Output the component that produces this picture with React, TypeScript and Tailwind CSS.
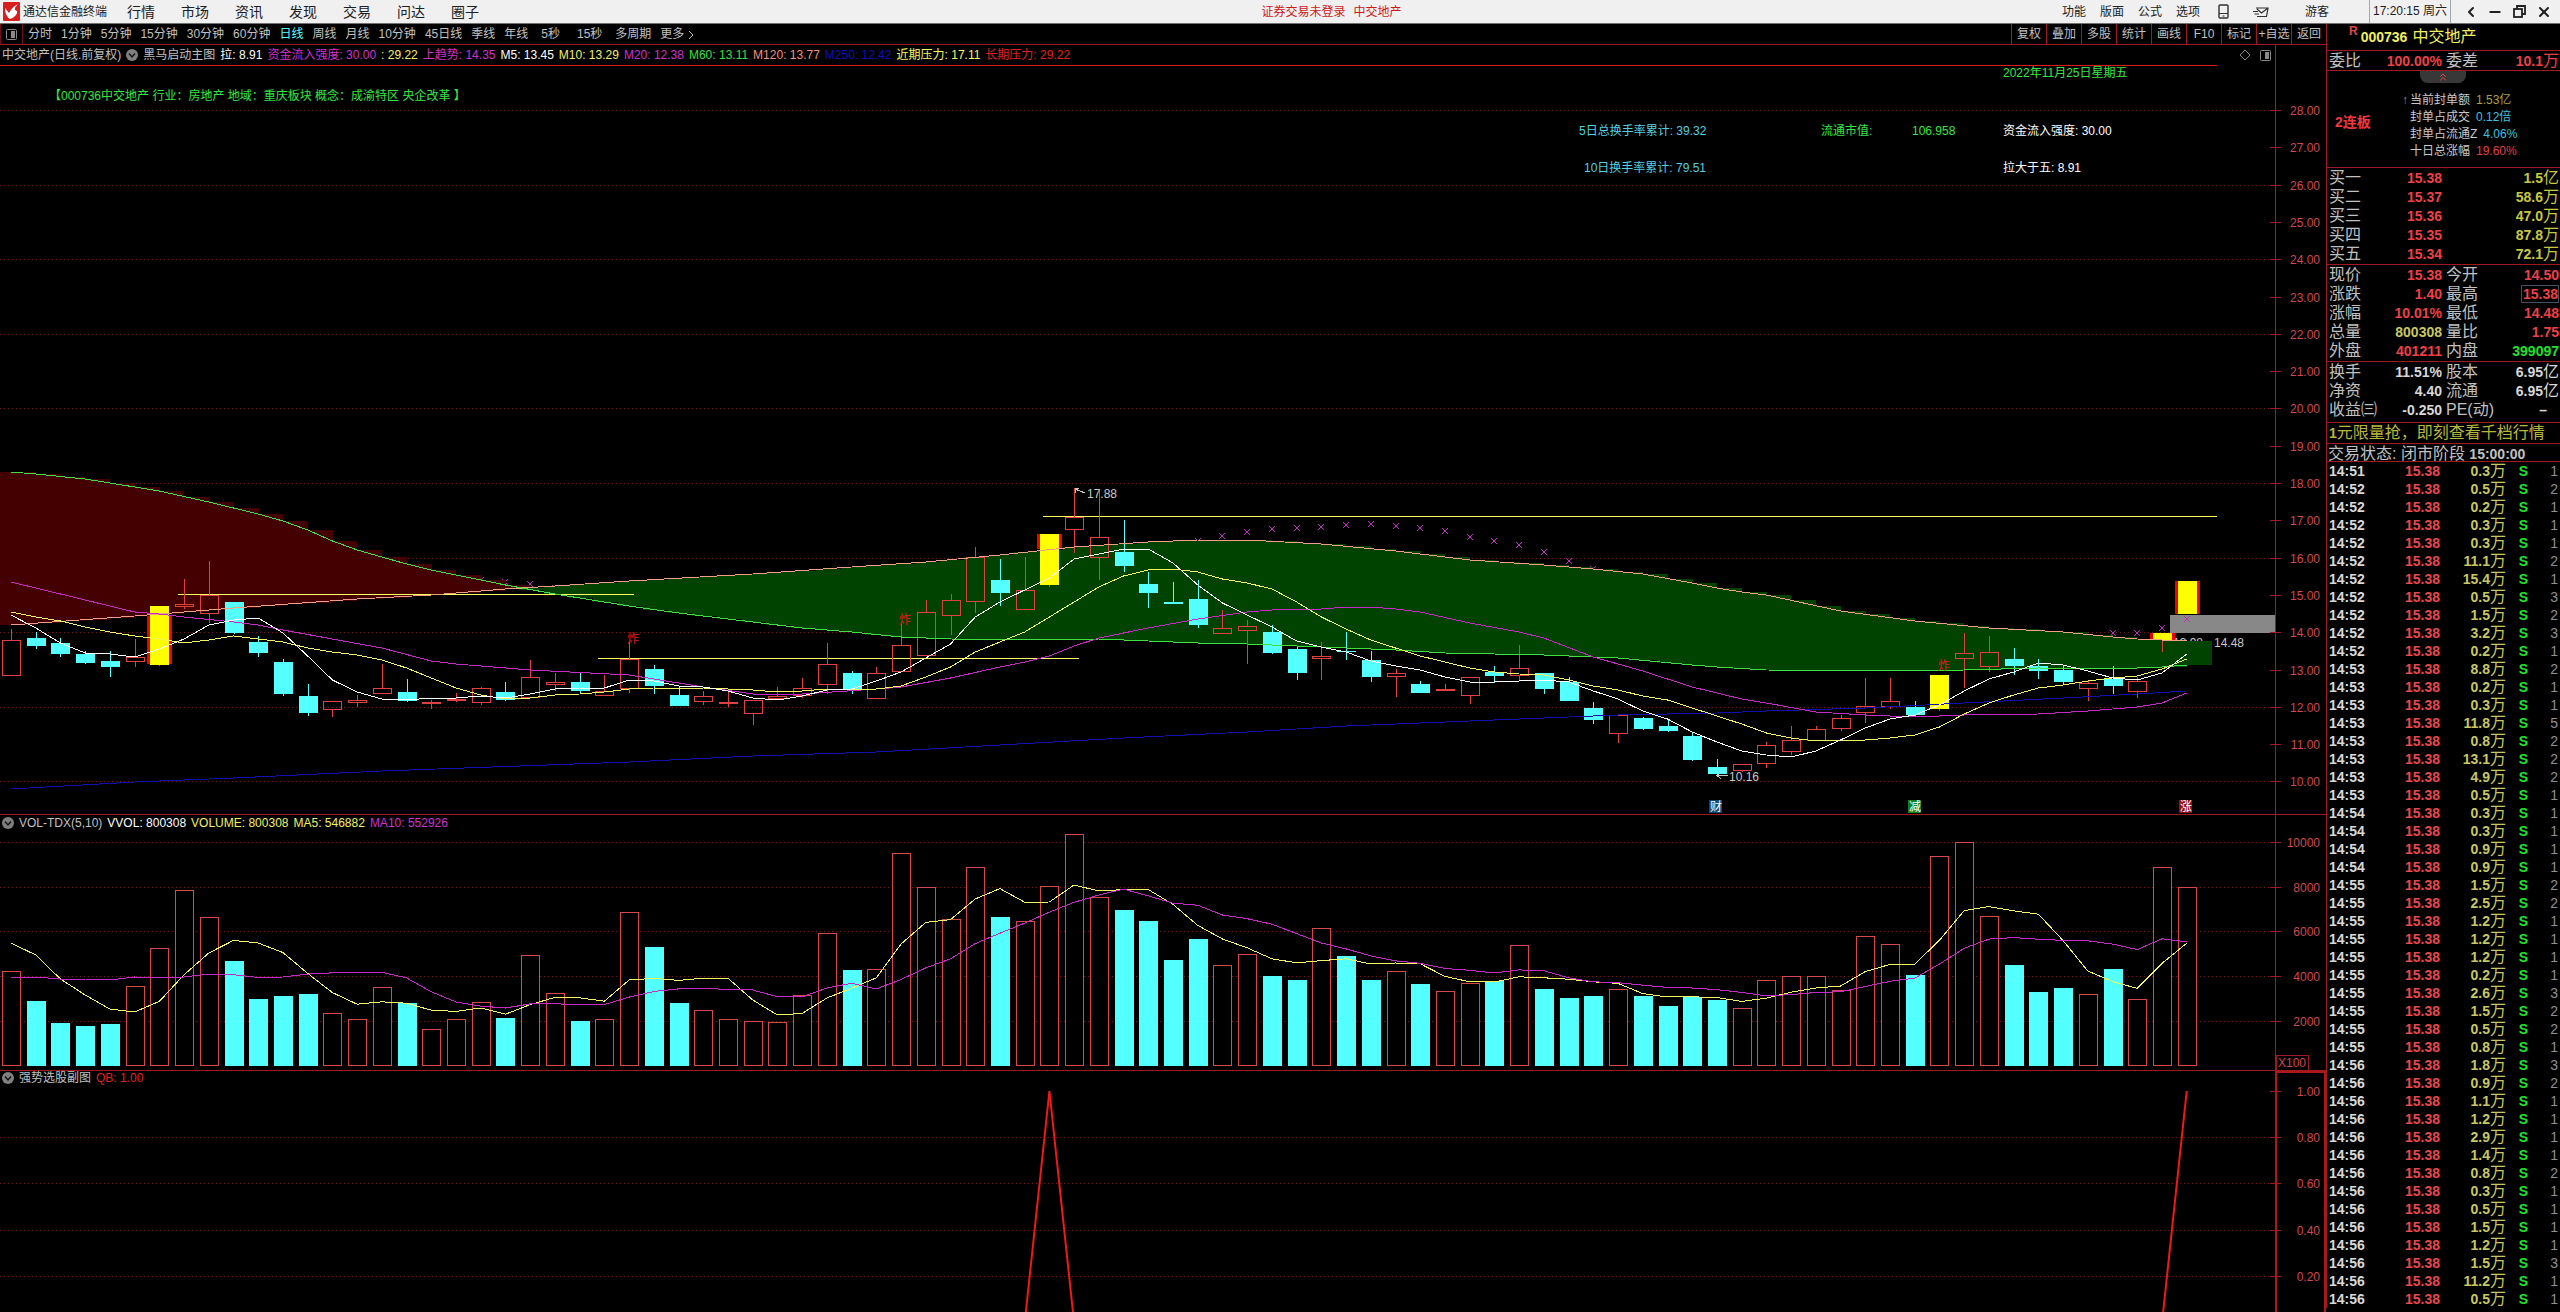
import type { ReactNode } from "react";
import { ChevronLeft, Minus, X, ChevronsUp } from "lucide-react";

const menus = ["行情", "市场", "资讯", "发现", "交易", "问达", "圈子"];
const rightMenus = ["功能", "版面", "公式", "选项"];
const periods = ["分时", "1分钟", "5分钟", "15分钟", "30分钟", "60分钟", "日线", "周线", "月线", "10分钟", "45日线", "季线", "年线", "5秒", "15秒", "多周期", "更多"];
const tools = ["复权", "叠加", "多股", "统计", "画线", "F10", "标记", "+自选", "返回"];

type Kind = "r" | "c" | "y";
// kind, body top, body bottom, high, low
const candles: [Kind, number, number, number, number][] = [
  ["r", 640, 676, 629, 676], ["c", 638, 646, 632, 649], ["c", 643, 654, 638, 657], ["c", 654, 663, 651, 664], ["c", 661, 667, 651, 677],
  ["r", 657, 662, 639, 667], ["y", 606, 665, 606, 666], ["r", 604, 607, 579, 609], ["r", 595, 614, 561, 623], ["c", 602, 633, 602, 634],
  ["c", 642, 653, 636, 657], ["c", 662, 694, 659, 696], ["c", 696, 713, 684, 716], ["r", 701, 710, 701, 717], ["r", 700, 703, 695, 707],
  ["r", 688, 694, 664, 694], ["c", 692, 701, 679, 702], ["r", 702, 704, 700, 709], ["r", 699, 700, 693, 702], ["r", 688, 703, 687, 705],
  ["c", 692, 700, 682, 701], ["r", 677, 698, 660, 698], ["r", 682, 685, 673, 691], ["c", 682, 691, 673, 693], ["r", 691, 696, 675, 696],
  ["r", 659, 689, 642, 693], ["c", 669, 686, 665, 694], ["c", 695, 706, 687, 706], ["r", 696, 702, 691, 705], ["r", 702, 703, 692, 707],
  ["r", 700, 714, 700, 725], ["r", 696, 699, 687, 699], ["r", 688, 696, 678, 698], ["r", 664, 685, 643, 694], ["c", 673, 689, 671, 694],
  ["r", 673, 699, 667, 699], ["r", 645, 672, 624, 672], ["r", 612, 656, 600, 656], ["r", 600, 616, 594, 635], ["r", 557, 602, 547, 613],
  ["c", 580, 593, 559, 606], ["r", 590, 610, 557, 610], ["y", 534, 585, 534, 587], ["r", 517, 530, 488, 553], ["r", 537, 558, 490, 580],
  ["c", 552, 566, 520, 572], ["c", 584, 593, 572, 608], ["c", 602, 604, 582, 604], ["c", 599, 625, 580, 628], ["r", 628, 634, 610, 634],
  ["r", 626, 631, 620, 664], ["c", 632, 653, 625, 654], ["c", 649, 673, 646, 680], ["r", 656, 659, 642, 680], ["c", 651, 652, 632, 660],
  ["c", 660, 677, 651, 682], ["r", 673, 677, 669, 697], ["c", 684, 693, 681, 693], ["r", 689, 691, 684, 691], ["r", 677, 696, 677, 704],
  ["c", 672, 676, 666, 683], ["r", 668, 676, 645, 680], ["c", 673, 689, 673, 694], ["c", 682, 701, 677, 701], ["c", 708, 720, 702, 724],
  ["r", 715, 734, 715, 743], ["c", 718, 729, 717, 730], ["c", 726, 731, 720, 732], ["c", 736, 760, 733, 761], ["c", 767, 774, 759, 775],
  ["r", 764, 771, 764, 772], ["r", 745, 764, 742, 768], ["r", 740, 752, 726, 755], ["r", 729, 741, 726, 741], ["r", 718, 729, 715, 731],
  ["r", 706, 713, 678, 723], ["r", 701, 707, 678, 709], ["c", 707, 715, 701, 717], ["y", 675, 709, 672, 711], ["r", 653, 659, 633, 688],
  ["r", 652, 667, 636, 672], ["c", 659, 666, 648, 675], ["c", 666, 671, 659, 679], ["c", 670, 682, 665, 684], ["r", 683, 689, 681, 701],
  ["c", 679, 686, 666, 694], ["r", 681, 692, 677, 698], ["y", 633, 640, 633, 652], ["y", 581, 614, 581, 614],
];

const ma5 = [615, 628, 643, 653, 654, 657, 649, 639, 625, 620, 618, 633, 656, 680, 692, 699, 700, 698, 698, 696, 698, 694, 689, 688, 688, 680, 681, 686, 687, 691, 698, 700, 696, 690, 689, 681, 672, 658, 644, 617, 602, 590, 578, 559, 554, 549, 549, 563, 585, 603, 615, 627, 641, 647, 652, 661, 666, 670, 677, 682, 682, 681, 680, 682, 691, 699, 711, 719, 732, 742, 751, 755, 757, 751, 740, 728, 719, 715, 705, 691, 679, 672, 663, 665, 671, 678, 680, 673, 654];
const ma10 = [612, 617, 621, 627, 632, 636, 639, 643, 640, 636, 639, 642, 648, 652, 655, 660, 668, 678, 688, 695, 699, 698, 695, 694, 692, 689, 688, 688, 688, 689, 690, 692, 691, 689, 689, 689, 686, 677, 667, 652, 642, 632, 617, 602, 587, 576, 570, 569, 572, 579, 583, 589, 602, 617, 629, 640, 648, 656, 662, 668, 672, 674, 675, 680, 686, 690, 696, 700, 708, 716, 724, 733, 738, 741, 740, 740, 738, 735, 727, 714, 703, 695, 688, 685, 681, 678, 676, 669, 659];

// slow averages, sampled as [bar, y]
type Samples = [number, number][];
const ma20: Samples = [[0, 582], [5, 612], [6, 614], [7, 617], [9, 622], [10, 625], [11, 630], [13, 639], [15, 648], [17, 661], [18, 664], [21, 670], [25, 675], [26, 679], [28, 687], [30, 694], [32, 694], [35, 689], [36, 687], [38, 678], [40, 667], [41, 662], [42, 656], [43, 646], [44, 638], [46, 628], [48, 619], [50, 612], [51, 610], [53, 609], [54, 607], [55, 607], [56, 609], [57, 612], [59, 623], [61, 632], [62, 638], [64, 657], [66, 671], [68, 687], [70, 699], [71, 703], [73, 712], [75, 715], [77, 717], [79, 715], [82, 714], [84, 711], [86, 707], [87, 703], [88, 693]];
const ma60: Samples = [[0, 472], [1, 474], [3, 479], [6, 491], [8, 502], [9, 508], [10, 514], [11, 521], [12, 530], [13, 541], [14, 550], [15, 557], [16, 564], [17, 570], [18, 575], [20, 585], [22, 594], [24, 602], [25, 606], [27, 613], [30, 622], [32, 628], [34, 632], [36, 637], [38, 639], [42, 640], [44, 639], [46, 641], [48, 643], [50, 644], [54, 648], [56, 650], [58, 653], [60, 654], [62, 655], [65, 658], [68, 665], [69, 667], [71, 670], [77, 671], [79, 670], [82, 668], [85, 669], [86, 668], [87, 667], [88, 665]];
const ma120: Samples = [[0, 625], [5, 616], [7, 612], [9, 608], [14, 599], [17, 595], [20, 589], [22, 586], [25, 581], [30, 574], [34, 567], [37, 562], [40, 555], [43, 547], [46, 542], [48, 540], [50, 540], [53, 544], [56, 551], [59, 560], [62, 565], [64, 569], [66, 574], [68, 583], [69, 588], [70, 592], [71, 595], [74, 611], [77, 621], [80, 628], [83, 632], [85, 637], [86, 639], [88, 641]];
const ma250: Samples = [[0, 789], [5, 782], [9, 778], [15, 771], [25, 762], [30, 756], [35, 752], [40, 745], [45, 738], [50, 732], [54, 726], [58, 722], [62, 718], [65, 715], [69, 713], [71, 711], [75, 708], [79, 703], [83, 698], [86, 694], [88, 691]];

const crosses: Samples = [[19, 580], [20, 582], [21, 584], [22, 588], [48, 541], [49, 536], [50, 532], [51, 529], [52, 528], [53, 527], [54, 525], [55, 524], [56, 526], [57, 528], [58, 531], [59, 537], [60, 541], [61, 545], [62, 552], [63, 561], [64, 569], [85, 633], [86, 633], [87, 628]];

const volTops = [971, 1001, 1023, 1026, 1024, 986, 948, 890, 917, 961, 999, 996, 994, 1013, 1019, 987, 1003, 1029, 1019, 1002, 1018, 955, 993, 1021, 1019, 912, 947, 1003, 1010, 1019, 1021, 1022, 995, 933, 970, 969, 853, 887, 919, 867, 917, 921, 886, 834, 897, 910, 921, 960, 939, 965, 954, 976, 980, 928, 956, 980, 971, 984, 991, 983, 981, 945, 989, 998, 996, 989, 996, 1006, 997, 1000, 1008, 980, 976, 976, 990, 936, 944, 975, 856, 842, 916, 965, 992, 988, 994, 969, 999, 867, 887];
const VOL_BASE = 1066;

const priceTicks = Array.from({ length: 19 }, (_, k) => 28 - k);
const volTicks: [string, number][] = [["10000", 842], ["8000", 887], ["6000", 931], ["4000", 976], ["2000", 1021]];
const signalTicks: [string, number][] = [["1.00", 1091], ["0.80", 1137], ["0.60", 1183], ["0.40", 1230], ["0.20", 1276]];

const barX = (i: number) => 11 + 24.724 * i;
const priceY = (p: number) => Math.round(110 + (28 - p) * 37.3);
const linePoints = (ys: number[]) => ys.map((y, i) => `${barX(i)},${y}`).join(" ");
const samplePoints = (s: Samples) => s.map(([i, y]) => `${barX(i)},${y}`).join(" ");

function valueAt(s: Samples, i: number) {
  const k = s.findIndex(p => p[0] >= i);
  if (k <= 0) return s[0][1];
  const [i0, y0] = s[k - 1];
  const [i1, y1] = s[k];
  return y0 + ((y1 - y0) * (i - i0)) / (i1 - i0);
}

function movingAverage(ys: number[], n: number, head: number[]) {
  return ys.map((_, i) => (i < n - 1 ? head[i] : ys.slice(i - n + 1, i + 1).reduce((a, b) => a + b, 0) / n));
}

const volMa5 = movingAverage(volTops, 5, [943, 955, 979, 995]);
const volMa10 = movingAverage(volTops, 10, [977, 977, 979, 979, 980, 977, 978, 977, 974]);

const bids: [string, string, string, string][] = [
  ["买一", "15.38", "1.5", "亿"],
  ["买二", "15.37", "58.6", "万"],
  ["买三", "15.36", "47.0", "万"],
  ["买四", "15.35", "87.8", "万"],
  ["买五", "15.34", "72.1", "万"],
];

const RED = "text-[#ee4048]";
const WHITE = "text-[#d8d8d8]";
const quotes = [
  { l: "现价", v: "15.38", c: RED, l2: "今开", v2: "14.50", c2: RED },
  { l: "涨跌", v: "1.40", c: RED, l2: "最高", v2: "15.38", c2: RED, boxed: true },
  { l: "涨幅", v: "10.01%", c: RED, l2: "最低", v2: "14.48", c2: RED },
  { l: "总量", v: "800308", c: "text-[#c8c860]", l2: "量比", v2: "1.75", c2: RED },
  { l: "外盘", v: "401211", c: RED, l2: "内盘", v2: "399097", c2: "text-[#20e030]" },
];
const basics = [
  { l: "换手", v: "11.51%", c: WHITE, l2: "股本", v2: "6.95", unit: "亿", c2: WHITE },
  { l: "净资", v: "4.40", c: WHITE, l2: "流通", v2: "6.95", unit: "亿", c2: WHITE },
];

const ticks: [string, string, number][] = [
  ["14:51", "0.3", 1], ["14:52", "0.5", 2], ["14:52", "0.2", 1], ["14:52", "0.3", 1], ["14:52", "0.3", 1], ["14:52", "11.1", 2],
  ["14:52", "15.4", 1], ["14:52", "0.5", 3], ["14:52", "1.5", 2], ["14:52", "3.2", 3], ["14:52", "0.2", 1], ["14:53", "8.8", 2],
  ["14:53", "0.2", 1], ["14:53", "0.3", 1], ["14:53", "11.8", 5], ["14:53", "0.8", 2], ["14:53", "13.1", 2], ["14:53", "4.9", 2],
  ["14:53", "0.5", 1], ["14:54", "0.3", 1], ["14:54", "0.3", 1], ["14:54", "0.9", 1], ["14:54", "0.9", 1], ["14:55", "1.5", 2],
  ["14:55", "2.5", 2], ["14:55", "1.2", 1], ["14:55", "1.2", 1], ["14:55", "1.2", 1], ["14:55", "0.2", 1], ["14:55", "2.6", 3],
  ["14:55", "1.5", 2], ["14:55", "0.5", 2], ["14:55", "0.8", 1], ["14:56", "1.8", 3], ["14:56", "0.9", 2], ["14:56", "1.1", 1],
  ["14:56", "1.2", 1], ["14:56", "2.9", 1], ["14:56", "1.4", 1], ["14:56", "0.8", 2], ["14:56", "0.3", 1], ["14:56", "0.5", 1],
  ["14:56", "1.5", 1], ["14:56", "1.2", 1], ["14:56", "1.5", 3], ["14:56", "11.2", 1], ["14:56", "0.5", 1],
];

function PanelIcon() {
  return (
    <svg width="13" height="13" viewBox="0 0 13 13" fill="none" stroke="#8a8a8a">
      <rect x="1.5" y="1.5" width="10" height="10" rx="1" />
      <rect x="6" y="3" width="4" height="7" fill="#8a8a8a" stroke="none" />
    </svg>
  );
}

function DropIcon() {
  return (
    <svg width="12" height="12" viewBox="0 0 12 12" className="shrink-0">
      <circle cx="6" cy="6" r="6" fill="#808080" />
      <path d="M3 4.5 L6 8 L9 4.5" fill="none" stroke="#101010" strokeWidth="1.4" />
    </svg>
  );
}

function TitleBar() {
  return (
    <header className="flex items-center h-6 bg-[#f0f0f0] border-b border-[#707070] text-[#202020] text-xs">
      <div className="flex items-center gap-[3px] pl-[3px]">
        <svg width="17" height="19" viewBox="0 0 17 19">
          <rect width="17" height="19" rx="1" fill="#d81e1e" />
          <path d="M2 6 L6 11 C8 7 11 4 15 2 C11 6 11 8 14 9 C15 12 11 16 7 17 C4 15 2 11 2 6 Z" fill="#fff" />
        </svg>
        <h1>通达信金融终端</h1>
      </div>
      <nav className="flex gap-[26px] ml-5 text-sm">
        {menus.map(m => <button key={m}>{m}</button>)}
      </nav>
      <p className="flex-1 flex justify-center gap-2 pl-[122px] text-[#d01818]">
        <span>证券交易未登录</span>
        <span>中交地产</span>
      </p>
      <div className="flex gap-[14px] pr-[2px]">
        {rightMenus.map(m => <button key={m}>{m}</button>)}
      </div>
      <button aria-label="手机版" className="ml-4">
        <svg width="11" height="15" viewBox="0 0 11 15" fill="none" stroke="#303030">
          <rect x="1" y="1" width="9" height="13" rx="1" strokeWidth="1.4" />
          <path d="M1 9.5 H10 M4.5 12 H6.5" />
        </svg>
      </button>
      <button aria-label="消息" className="ml-6">
        <svg width="16" height="12" viewBox="0 0 16 12" fill="none" stroke="#303030" strokeWidth="1.2">
          <path d="M3 2 H15 L13.5 10.5 H4 M4 3 L8.5 7 L15 2 M0 5.5 H5 M1.5 8 H6" />
        </svg>
      </button>
      <button className="ml-9">游客</button>
      <time className="ml-10 px-[3px] h-[23px] leading-[23px] border-x border-[#a0a8b0]">17:20:15 周六</time>
      <div className="flex items-center gap-2 pl-3 pr-2">
        <button aria-label="收起"><ChevronLeft className="w-4 h-4" strokeWidth={3} /></button>
        <button aria-label="最小化"><Minus className="w-4 h-4" strokeWidth={3} /></button>
        <button aria-label="还原" className="px-[2px]">
          <svg width="13" height="13" viewBox="0 0 13 13" fill="none" stroke="#202020" strokeWidth="1.8">
            <path d="M4 4 V1 H12 V9 H9" />
            <rect x="1" y="4" width="8" height="8" />
          </svg>
        </button>
        <button aria-label="关闭"><X className="w-4 h-4" strokeWidth={3} /></button>
      </div>
    </header>
  );
}

function PeriodBar() {
  return (
    <div className="flex items-stretch h-[21px] border-b border-[#a01820] text-xs text-[#c0c0c0]">
      <button aria-label="面板" className="flex items-center px-1 border-x border-[#701018]"><PanelIcon /></button>
      <nav className="flex items-center gap-[9px] pl-[5px]">
        {periods.map(p => (
          <button key={p} className={p === "日线" ? "text-[#54ffff]" : p.endsWith("秒") ? "px-1" : ""}>
            {p}
            {p === "更多" && <svg width="6" height="10" viewBox="0 0 6 10" className="inline ml-1" fill="none" stroke="#c0c0c0"><path d="M1 1 L5 5 L1 9" /></svg>}
          </button>
        ))}
      </nav>
      <div className="flex ml-auto">
        {tools.map(t => <button key={t} className="w-[35px] border-l border-[#a01820] whitespace-nowrap">{t}</button>)}
      </div>
    </div>
  );
}

function ChartHeader({ children, className, axisClass }: { children: ReactNode; className: string; axisClass: string }) {
  return (
    <div className={`flex items-stretch text-xs whitespace-nowrap text-[#c0c0c0] ${className}`}>
      <div className="flex-1 flex items-center gap-[5px] pl-[2px]">{children}</div>
      <div className={`w-[51px] ${axisClass}`} />
    </div>
  );
}

function Axis({ items, top, bottom }: { items: [string, number][]; top: number; bottom: number }) {
  return (
    <>
      <path d={`M2275.5 ${top} V${bottom}`} stroke="#a01820" />
      {items.map(([label, y]) => (
        <g key={label}>
          <path d={`M2270 ${y + 0.5} H2281`} stroke="#a01820" />
          <text x="2320" y={y + 5} textAnchor="end" fill="#d04850">{label}</text>
        </g>
      ))}
    </>
  );
}

function Grid({ ys }: { ys: number[] }) {
  return <>{ys.map(y => <path key={y} d={`M0 ${y + 0.5} H2270`} stroke="#70181c" strokeDasharray="1 3" />)}</>;
}

function Candle({ i }: { i: number }) {
  const [kind, top, bottom, high, low] = candles[i];
  const x = Math.round(barX(i));
  const h = Math.max(bottom - top, 1);
  if (kind === "y") {
    return (
      <g>
        <path d={`M${x + 0.5} ${bottom} V${low}`} stroke="#e04040" />
        {i !== 78 && <rect x={x - 12} y={i === 6 ? 616 : top} width="25" height={i === 42 ? 15 : i === 6 ? 48 : h} fill="#f00000" />}
        <rect x={x - 9} y={top} width="19" height={h} fill="#ffff00" />
      </g>
    );
  }
  if (kind === "c") {
    return (
      <g>
        <path d={`M${x + 0.5} ${high} V${low}`} stroke="#54ffff" />
        <rect x={x - 9} y={top} width="19" height={h} fill="#54ffff" />
      </g>
    );
  }
  return (
    <g stroke="#e04040" fill="none">
      <path d={`M${x + 0.5} ${high} V${top} M${x + 0.5} ${bottom} V${low}`} />
      <rect x={x - 8.5} y={top + 0.5} width="18" height={Math.max(h - 1, 0.5)} />
    </g>
  );
}

function Cross({ i, y }: { i: number; y: number }) {
  const x = Math.round(barX(i));
  return <path d={`M${x - 3} ${y - 3} l6 6 M${x + 3} ${y - 3} l-6 6`} stroke="#c030c0" />;
}

function Badge({ x, fill, label }: { x: number; fill: string; label: string }) {
  return (
    <g>
      <rect x={x} y="800" width="13" height="13" fill={fill} />
      <text x={x + 1} y="811" fontSize="12" fill="#fff">{label}</text>
    </g>
  );
}

function PriceChart() {
  return (
    <svg viewBox="0 65 2326 749" className="block w-full h-auto text-xs" shapeRendering="crispEdges" role="img" aria-label="日线">
      <Grid ys={priceTicks.filter(p => p % 2 === 0).map(priceY)} />
      <path d="M0 65.5 H2217" stroke="#e01818" />

      <g fill="#c8c8c8">
        <text x="2173" y="647">13.98</text>
        <text x="2214" y="647">14.48</text>
      </g>
      {crosses.map(([i, y]) => <Cross key={i} i={i} y={y} />)}

      {/* band between M60 and M120 */}
      {candles.map((_, i) => {
        const a = valueAt(ma60, i);
        const b = valueAt(ma120, i);
        return <rect key={i} x={barX(i) - 11} y={Math.min(a, b)} width="36" height={Math.abs(a - b)} fill={a < b ? "#440000" : "#004200"} />;
      })}

      <g stroke="#ffff60">
        <path d="M178 594.5 H634" />
        <path d="M598 658.5 H1079" />
        <path d="M1043 516.5 H2217" />
      </g>

      {candles.map((_, i) => <Candle key={i} i={i} />)}

      <g fill="none">
        <polyline points={samplePoints(ma250)} stroke="#1010b0" />
        <polyline points={samplePoints(ma120)} stroke="#f0a080" />
        <polyline points={samplePoints(ma60)} stroke="#40e040" />
        <polyline points={samplePoints(ma20)} stroke="#c828c8" />
        <polyline points={linePoints(ma10)} stroke="#f4f460" />
        <polyline points={linePoints(ma5)} stroke="#ffffff" />
      </g>

      <rect x="2170" y="615" width="105" height="18" fill="#888888" />
      <Cross i={88} y={619} />

      <g fill="#e81818">
        <text x="627" y="643">炸</text>
        <text x="899" y="624">炸</text>
        <text x="1938" y="670">炸</text>
      </g>
      <g fill="#c8c8c8">
        <text x="1087" y="498">17.88</text>
        <text x="1729" y="781">10.16</text>
      </g>
      <path d="M1085 493 L1075 489 M1079 488 H1075 V493 M1728 775.5 H1717 M1721 772 L1717 775.5 L1721 779" stroke="#c8c8c8" fill="none" />

      <text x="49" y="100" fill="#30e840">【000736中交地产 行业：房地产 地域：重庆板块 概念：成渝特区 央企改革 】</text>
      <text x="1579" y="135" fill="#50d0e0">5日总换手率累计: 39.32</text>
      <text x="1584" y="172" fill="#50d0e0">10日换手率累计: 79.51</text>
      <text x="1821" y="135" fill="#30e840">流通市值:</text>
      <text x="1912" y="135" fill="#30e840">106.958</text>
      <text x="2003" y="77" fill="#30e840">2022年11月25日星期五</text>
      <text x="2003" y="135" fill="#ffffff">资金流入强度: 30.00</text>
      <text x="2003" y="172" fill="#ffffff">拉大于五: 8.91</text>

      <Badge x={1709} fill="#104878" label="财" />
      <Badge x={1908} fill="#108020" label="减" />
      <Badge x={2179} fill="#901010" label="涨" />

      <Axis items={priceTicks.map(p => [p.toFixed(2), priceY(p)])} top={65} bottom={814} />
    </svg>
  );
}

function VolumeChart() {
  return (
    <svg viewBox="0 831 2326 239" className="block w-full h-auto text-xs" shapeRendering="crispEdges" role="img" aria-label="成交量">
      <Grid ys={volTicks.map(t => t[1])} />
      {volTops.map((y, i) => {
        const x = Math.round(barX(i));
        return candles[i][0] === "c"
          ? <rect key={i} x={x - 9} y={y} width="19" height={VOL_BASE - y} fill="#54ffff" />
          : <rect key={i} x={x - 8.5} y={y + 0.5} width="18" height={VOL_BASE - y - 1} fill="#000" stroke="#d84848" />;
      })}
      <polyline points={linePoints(volMa5)} fill="none" stroke="#f4f460" />
      <polyline points={linePoints(volMa10)} fill="none" stroke="#c828c8" />
      <Axis items={volTicks} top={831} bottom={1070} />
      <rect x="2276.5" y="1055.5" width="32" height="15" fill="none" stroke="#a01820" />
      <text x="2278" y="1067" fill="#d04850">X100</text>
    </svg>
  );
}

function SignalChart() {
  return (
    <svg viewBox="0 1085 2326 227" className="block w-full h-auto text-xs" shapeRendering="crispEdges" role="img" aria-label="强势选股">
      <Grid ys={signalTicks.slice(1).map(t => t[1])} />
      <g fill="none" stroke="#f01818" strokeWidth="2" shapeRendering="auto">
        <path d={`M${barX(41)} 1323 L${barX(42)} 1091 L${barX(43)} 1323`} />
        <path d={`M${barX(87)} 1323 L${barX(88)} 1091`} />
      </g>
      <Axis items={signalTicks} top={1085} bottom={1312} />
      <path d="M2276 1085 V1312 M2325 1085 V1312" stroke="#b01818" strokeWidth="2" />
    </svg>
  );
}

interface QuoteRowProps { l: string; v: string; c: string; l2: string; v2: string; c2: string; unit?: string; boxed?: boolean }

function QuoteRow({ l, v, c, l2, v2, c2, unit, boxed }: QuoteRowProps) {
  return (
    <div className="flex items-center h-[19px] pl-[2px] pr-[1px] text-base leading-[19px] text-[#c0c0c0] whitespace-nowrap">
      <span>{l}</span>
      <span className={`ml-auto text-sm font-bold ${c}`}>{v}</span>
      <div className="flex items-center w-[117px] pl-1">
        <span>{l2}</span>
        <span className={`ml-auto ${c2} ${boxed ? "flex items-center h-[18px] pl-px border border-[#405060]" : ""}`}>
          <b className="text-sm">{v2}</b>{unit}
        </span>
      </div>
    </div>
  );
}

function Sidebar() {
  return (
    <aside className="w-[234px] shrink-0 border-l border-[#a01820]">
      <h2 className="flex items-center h-[26px] pl-[22px] text-base text-[#f0f060]">
        <sup className="text-xs font-bold text-[#e04848]">R</sup>
        <b className="text-sm pl-[3px] pr-[5px]">000736</b>
        <span>中交地产</span>
      </h2>
      <div className="border-t border-[#a01820]">
        <QuoteRow l="委比" v="100.00%" c={RED} l2="委差" v2="10.1" unit="万" c2={RED} />
      </div>

      <div className="relative flex h-[97px] border-t border-[#a01820] pt-[21px] text-xs">
        <button aria-label="收起" className="absolute top-0 left-[93px] flex justify-center w-[46px] h-3 rounded-b-lg bg-[#383838]">
          <ChevronsUp className="w-3 h-3 text-[#e04850]" />
        </button>
        <p className="w-[75px] pl-2 pt-5 text-sm font-bold text-[#f03840]">2连板</p>
        <dl className="text-[#c8c8c8] leading-[17px]">
          <div className="flex gap-[6px]"><dt className="flex"><span className="w-2 text-[#909090]">↑</span>当前封单额</dt><dd className="text-[#a8a048]">1.53亿</dd></div>
          <div className="flex gap-[6px] pl-2"><dt>封单占成交</dt><dd className="text-[#38c0e0]">0.12倍</dd></div>
          <div className="flex gap-[6px] pl-2"><dt>封单占流通Z</dt><dd className="text-[#38c0e0]">4.06%</dd></div>
          <div className="flex gap-[6px] pl-2"><dt>十日总涨幅</dt><dd className="text-[#e04048]">19.60%</dd></div>
        </dl>
      </div>

      <div className="border-t border-[#a01820] pb-px">
        {bids.map(([label, price, vol, unit]) => (
          <QuoteRow key={label} l={label} v={price} c={RED} l2="" v2={vol} unit={unit} c2="text-[#c8c840]" />
        ))}
      </div>
      <div className="border-t border-[#a01820] pb-px">
        {quotes.map(q => <QuoteRow key={q.l} {...q} />)}
      </div>
      <div className="border-t border-[#a01820] pb-[3px]">
        {basics.map(q => <QuoteRow key={q.l} {...q} />)}
        <QuoteRow l="收益㈢" v="-0.250" c={WHITE} l2="PE(动)" v2="–" c2={`pr-3 ${WHITE}`} />
      </div>
      <a href="#level2" className="block h-[21px] border-t border-[#a01820] pl-[2px] text-base leading-5 text-[#b8b838] whitespace-nowrap">
        <b className="text-sm">1</b>元限量抢，即刻查看千档行情
      </a>
      <p className="h-[19px] border-y border-[#a01820] pl-px text-base leading-[17px] text-[#c0c0c0] whitespace-nowrap">
        交易状态: 闭市阶段 <b className="text-sm">15:00:00</b>
      </p>

      <table className="w-full text-sm leading-[18px] border-collapse">
        <tbody>
          {ticks.map(([time, vol, n], k) => (
            <tr key={k} className="h-[18px]">
              <td className="p-0 pl-[2px] font-bold text-[#d8d8d8]">{time}</td>
              <td className="p-0 w-[60px] text-right font-bold text-[#e84850]">15.38</td>
              <td className="p-0 w-[66px] text-right font-bold text-[#c8c860]">
                <span className="flex items-center justify-end h-[18px]">{vol}<span className="text-base leading-[18px] font-normal">万</span></span>
              </td>
              <td className="p-0 w-[22px] text-right font-bold text-[#20e030]">S</td>
              <td className="p-0 w-8 pr-[2px] text-right text-[#909090]">{n}</td>
            </tr>
          ))}
        </tbody>
      </table>
    </aside>
  );
}

export default function App() {
  return (
    <div className="min-h-screen bg-black font-['Liberation_Sans','Noto_Sans_CJK_SC',sans-serif]">
      <TitleBar />
      <div className="flex items-start">
        <main className="flex-1 min-w-0">
          <PeriodBar />

          <ChartHeader className="h-5" axisClass="border-l border-[#a01820]">
            <span>中交地产(日线.前复权)</span>
            <DropIcon />
            <span>黑马启动主图</span>
            <span className="text-white">拉: 8.91</span>
            <span className="text-[#d030d0]">资金流入强度: 30.00</span>
            <span className="text-[#f0f060]">: 29.22</span>
            <span className="text-[#d030d0]">上趋势: 14.35</span>
            <span className="text-white">M5: 13.45</span>
            <span className="text-[#f0f060]">M10: 13.29</span>
            <span className="text-[#d030d0]">M20: 12.38</span>
            <span className="text-[#30e040]">M60: 13.11</span>
            <span className="text-[#f09080]">M120: 13.77</span>
            <span className="text-[#1010b8]">M250: 12.42</span>
            <span className="text-[#f8f860]">近期压力: 17.11</span>
            <span className="text-[#e02020]">长期压力: 29.22</span>
            <span className="flex items-center gap-2 ml-auto pr-[3px]">
              <svg width="12" height="12" viewBox="0 0 12 12" fill="none" stroke="#8a8a8a"><path d="M6 1 L11 6 L6 11 L1 6 Z" /></svg>
              <PanelIcon />
            </span>
          </ChartHeader>
          <PriceChart />

          <ChartHeader className="h-[17px] border-t border-[#a01820]" axisClass="border-l border-[#a01820]">
            <DropIcon />
            <span>VOL-TDX(5,10)</span>
            <span className="text-white">VVOL: 800308</span>
            <span className="text-[#f0f060]">VOLUME: 800308</span>
            <span className="text-[#f0f060]">MA5: 546882</span>
            <span className="text-[#d030d0]">MA10: 552926</span>
          </ChartHeader>
          <VolumeChart />

          <ChartHeader className="h-[15px] border-t border-[#a01820]" axisClass="border-x-2 border-t-2 border-[#b01818]">
            <DropIcon />
            <span>强势选股副图</span>
            <span className="text-[#e02020]">QB: 1.00</span>
          </ChartHeader>
          <SignalChart />
        </main>
        <Sidebar />
      </div>
    </div>
  );
}
